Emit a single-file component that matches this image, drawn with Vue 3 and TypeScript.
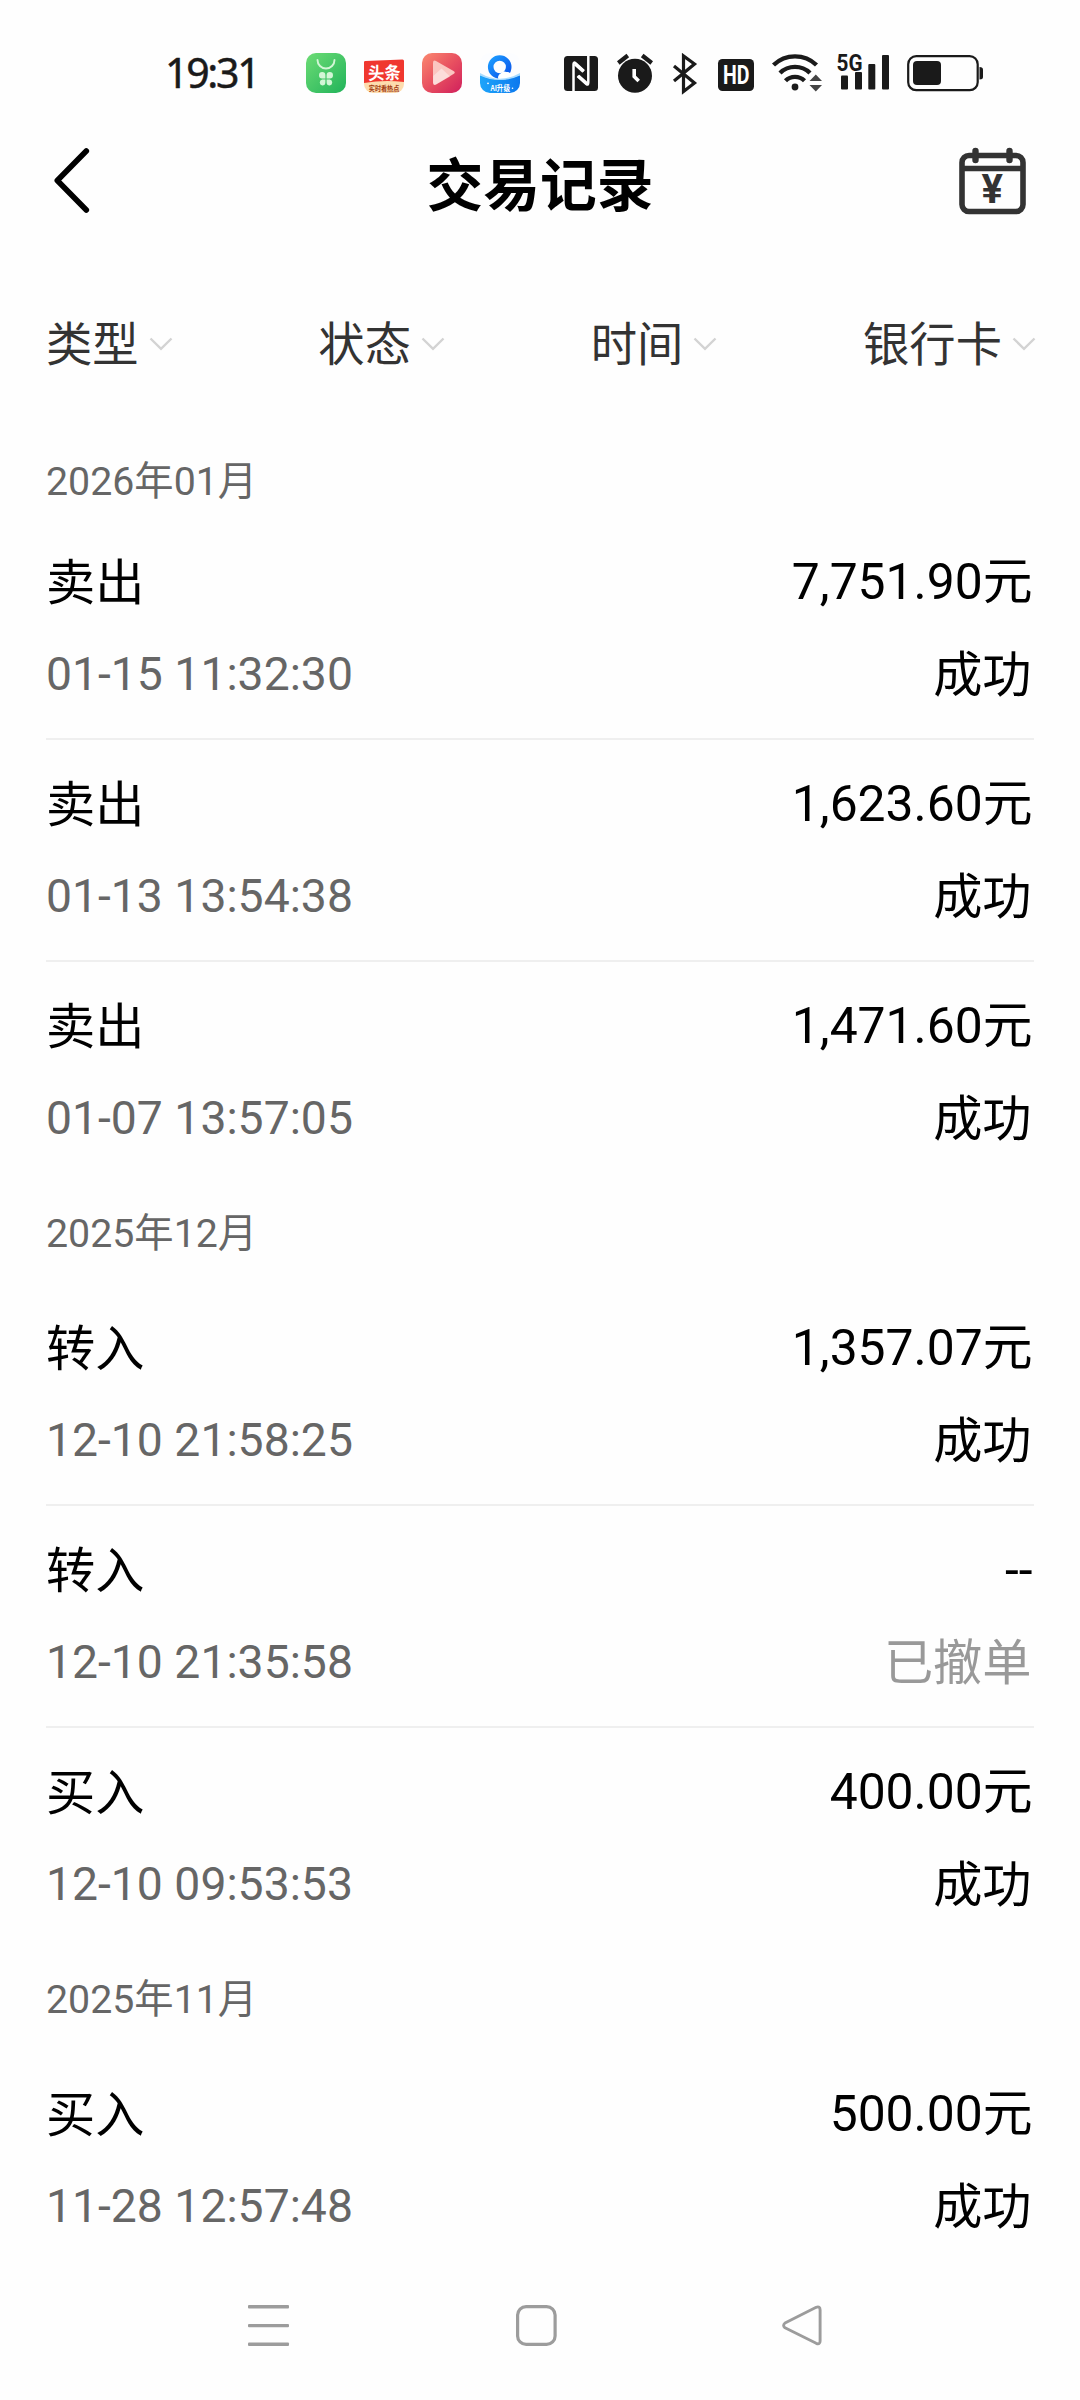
<script setup lang="ts">
interface Trade {
  kind: string
  time: string
  amount: string
  status: string
  muted?: boolean
}
interface Month {
  label: string
  trades: Trade[]
}

const filters: string[] = ['类型', '状态', '时间', '银行卡']

const months: Month[] = [
  {
    label: '2026年01月',
    trades: [
      { kind: '卖出', time: '01-15 11:32:30', amount: '7,751.90元', status: '成功' },
      { kind: '卖出', time: '01-13 13:54:38', amount: '1,623.60元', status: '成功' },
      { kind: '卖出', time: '01-07 13:57:05', amount: '1,471.60元', status: '成功' },
    ],
  },
  {
    label: '2025年12月',
    trades: [
      { kind: '转入', time: '12-10 21:58:25', amount: '1,357.07元', status: '成功' },
      { kind: '转入', time: '12-10 21:35:58', amount: '--', status: '已撤单', muted: true },
      { kind: '买入', time: '12-10 09:53:53', amount: '400.00元', status: '成功' },
    ],
  },
  {
    label: '2025年11月',
    trades: [{ kind: '买入', time: '11-28 12:57:48', amount: '500.00元', status: '成功' }],
  },
]
</script>

<template>
  <div class="screen">
    <div class="status-bar">
      <span class="clock">19:31</span>
      <svg class="apps" width="230" height="60" viewBox="300 44 230 60">
        <defs>
          <linearGradient id="gGreen" x1="0" y1="0" x2="1" y2="1">
            <stop offset="0" stop-color="#6ddc75" />
            <stop offset="1" stop-color="#21b35a" />
          </linearGradient>
          <linearGradient id="gRed" x1="0" y1="0" x2="1" y2="1">
            <stop offset="0" stop-color="#fb8a70" />
            <stop offset="0.5" stop-color="#e85060" />
            <stop offset="1" stop-color="#d01f5c" />
          </linearGradient>
          <linearGradient id="gRing" x1="0" y1="0" x2="1" y2="1">
            <stop offset="0" stop-color="#1b9bff" />
            <stop offset="1" stop-color="#0b55ea" />
          </linearGradient>
          <linearGradient id="gWave" x1="0" y1="0" x2="1" y2="0">
            <stop offset="0" stop-color="#1ea5fa" />
            <stop offset="1" stop-color="#0b78ee" />
          </linearGradient>
        </defs>
        <rect x="306" y="53" width="40" height="40" rx="10" fill="url(#gGreen)" />
        <path d="M317.500 60a8.500 8.500 0 0 0 17 0" fill="none" stroke="#d3f6d6" stroke-width="1.900" stroke-linecap="round" />
        <g fill="#d3f6d6">
          <path d="M322.200 72a3.200 3.200 0 0 1 3.200 3.200v3.200h-3.200a3.200 3.200 0 0 1 0-6.400z" />
          <path d="M329.800 72a3.200 3.200 0 0 0-3.200 3.200v3.200h3.200a3.200 3.200 0 0 0 0-6.400z" />
          <path d="M322.200 85.500a3.200 3.200 0 0 0 3.200-3.200v-2.700h-3.200a3 3 0 0 0 0 5.900z" />
          <path d="M329.800 85.500a3.200 3.200 0 0 1-3.200-3.200v-2.700h3.200a3 3 0 0 1 0 5.900z" />
        </g>
        <path d="M364 78h40v6a9 9 0 0 1-9 9h-22a9 9 0 0 1-9-9z" fill="#fddcae" />
        <path d="M364 62Q364 61 365.500 60.900L402.500 59.500Q404 59.500 404 61V82Q384 79.500 364 83z" fill="#f0372f" />
        <text x="368" y="79.300" textLength="32.500" lengthAdjust="spacingAndGlyphs" class="cjk" font-size="17.500" font-weight="700" fill="#fff" transform="rotate(-1.500 384 72)">头条</text>
        <text x="368.800" y="90.700" textLength="30.500" lengthAdjust="spacingAndGlyphs" class="cjk" font-size="6.800" font-weight="700" fill="#a03a12">实时看热点</text>
        <rect x="422" y="53" width="40" height="40" rx="10" fill="url(#gRed)" />
        <path d="M433 63q0-3.500 3-2l17.500 10q2.500 1.500 0 3l-17.500 10.500q-3 1.500-3-2z" fill="#fbc6c1" />
        <path d="M433.200 76l8.300-7.500 8.500 8-14 8q-2.800 1.200-2.800-2z" fill="#fff" opacity="0.4" />
        <path d="M480 63a10 10 0 0 1 10-10h20a10 10 0 0 1 10 10v12h-40z" fill="#fcfdff" />
        <circle cx="499.700" cy="67" r="9" fill="none" stroke="url(#gRing)" stroke-width="5.600" />
        <path d="M499 80a4.200 4.200 0 0 1 1.500-6.500 5.500 5.500 0 0 1 6-1.500 4.500 4.500 0 0 1 5 3q2.500 2.500 0 5z" fill="#fff" />
        <path d="M480 75Q500 84 520 75v8a10 10 0 0 1-10 10h-20a10 10 0 0 1-10-10z" fill="url(#gWave)" />
        <path d="M480 73Q500 84.500 520 73v2.500Q500 84.500 480 75.500z" fill="#a9dcff" />
        <text x="490.500" y="91" textLength="19.500" lengthAdjust="spacingAndGlyphs" class="cjk" font-size="7.800" font-weight="700" fill="#fff">AI升级</text>
        <circle cx="488" cy="83.300" r="0.900" fill="#fff" />
        <circle cx="512.500" cy="88.300" r="0.800" fill="#fff" />
      </svg>
      <svg class="system" width="440" height="60" viewBox="550 44 440 60" fill="#1a1a1a">
        <rect x="564" y="56" width="34" height="35" rx="3.500" />
        <path d="M573.500 91.500V64.500Q573.500 61.500 575.500 63.300L584 71" fill="none" stroke="#fff" stroke-width="2.500" />
        <path d="M588.300 55.500V82.500Q588.300 85.700 586.300 84L577.500 76" fill="none" stroke="#fff" stroke-width="2.500" />
        <path d="M575 64l8.500 7.500" stroke="#fff" stroke-width="3.200" />
        <path d="M586.800 83.500l-8.500-7.500" stroke="#fff" stroke-width="3.200" />
        <circle cx="635" cy="75.800" r="17" />
        <path d="M618.300 63l9.500-7.500M651.700 63l-9.500-7.500" stroke="#1a1a1a" stroke-width="4.200" />
        <path d="M634.200 69v7.500l4.500 4.600" fill="none" stroke="#fff" stroke-width="3.600" />
        <path d="M674 66l20.500 17-11 8.500V56l11 8-20.500 17" fill="none" stroke="#1a1a1a" stroke-width="3.200" />
        <rect x="718" y="59" width="36" height="32" rx="4.500" />
        <text x="723" y="83.700" class="hd" textLength="26.500" lengthAdjust="spacingAndGlyphs" font-size="25" font-weight="700" fill="#fff">HD</text>
        <g fill="none" stroke="#1a1a1a" stroke-width="4.400">
          <path d="M773.500 65a31 31 0 0 1 43 0" />
          <path d="M780 73a21.500 21.500 0 0 1 30 0" />
          <path d="M785.500 80.800a13.500 13.500 0 0 1 19 0" />
        </g>
        <circle cx="795" cy="87" r="3.400" />
        <path d="M809.500 81h12.500l-6.200-6.500zM809.500 85h12.500l-6.200 6.500z" fill="#444" />
        <rect x="841" y="75.500" width="7" height="14" rx="1" />
        <rect x="855" y="72" width="7" height="17.500" rx="1" />
        <rect x="868.300" y="64" width="7" height="25.500" rx="1" />
        <rect x="882" y="55" width="7" height="34.500" rx="1" />
        <text x="836.500" y="70.500" class="hd" textLength="26" lengthAdjust="spacingAndGlyphs" font-size="24.500" font-weight="700">5G</text>
        <rect x="908.200" y="56.200" width="69.500" height="34" rx="8" fill="none" stroke="#1a1a1a" stroke-width="2.200" />
        <rect x="913" y="61" width="28" height="24" rx="4" />
        <path d="M979.500 67q3.500 0 3.500 2.500v7.500q0 2.500-3.500 2.500z" />
      </svg>
    </div>

    <header class="header">
      <svg class="back" width="50" height="80" viewBox="46 140 50 80">
        <path d="M86.300 151L57.300 180.500L86.300 210" fill="none" stroke="#000" stroke-width="5.600" stroke-linecap="round" stroke-linejoin="round" />
      </svg>
      <h1>交易记录</h1>
      <svg width="80" height="80" viewBox="954 140 80 80">
        <g fill="none" stroke="#333" stroke-width="5.600">
          <rect x="962" y="155.500" width="61" height="56" rx="7" />
          <path d="M962 168.500h61" />
          <path d="M975.500 151v9M1009.500 151v9" stroke-width="6.400" stroke-linecap="round" />
        </g>
        <text x="992.300" y="203" text-anchor="middle" class="yen" font-size="40" font-weight="700" fill="#333">¥</text>
      </svg>
    </header>

    <nav class="filters">
      <button v-for="f in filters" :key="f" type="button">
        <span>{{ f }}</span>
        <svg width="24" height="14" viewBox="0 0 24 14">
          <path d="M1.500 1.500L12 11.800L22.500 1.500" fill="none" stroke="#d3d3d3" stroke-width="2.400" />
        </svg>
      </button>
    </nav>

    <main class="list">
      <section v-for="m in months" :key="m.label" class="month">
        <h2>{{ m.label }}</h2>
        <div v-for="t in m.trades" :key="t.time" class="trade">
          <div class="line">
            <span class="kind">{{ t.kind }}</span>
            <span>{{ t.amount }}</span>
          </div>
          <div class="line">
            <span class="time">{{ t.time }}</span>
            <span class="state" :class="{ muted: t.muted }">{{ t.status }}</span>
          </div>
        </div>
      </section>
    </main>

    <footer class="nav-bar">
      <svg width="42" height="42" viewBox="0 0 42 42" fill="#9c9c9c">
        <rect x="0" y="0" width="41" height="3.600" rx="1" />
        <rect x="0" y="19" width="41" height="3.200" rx="1" />
        <rect x="0" y="37.400" width="41" height="3.600" rx="1" />
      </svg>
      <svg width="42" height="42" viewBox="0 0 42 42">
        <rect x="2.600" y="1.600" width="37.500" height="37.800" rx="8.500" fill="none" stroke="#9c9c9c" stroke-width="3.200" />
      </svg>
      <svg width="42" height="42" viewBox="0 0 42 42">
        <path d="M4 18L35.200 2.300Q39.100 0.800 39.100 5V36Q39.100 40 35.200 38.300L4 22.800Q1.200 20.400 4 18z" fill="none" stroke="#9c9c9c" stroke-width="2.900" stroke-linejoin="round" />
      </svg>
    </footer>
  </div>
</template>

<style>
body {
  background: #fefefe;
}
</style>

<style scoped>
.screen {
  display: flex;
  flex-direction: column;
  width: 1080px;
  height: 2400px;
  overflow: hidden;
  background: #fefefe;
  color: #000;
  font-family: Roboto, 'Noto Sans CJK SC', sans-serif;
}
svg {
  display: block;
  flex: none;
}
.status-bar {
  display: flex;
  align-items: center;
  box-sizing: border-box;
  height: 120px;
  padding: 44px 0 16px 165px;
}
.clock {
  width: 135px;
  height: 60px;
  line-height: 57px;
  font-family: 'Noto Sans', sans-serif;
  font-size: 41px;
  font-weight: 400;
  letter-spacing: -2.300px;
  color: #1a1a1a;
  -webkit-text-stroke: 0.500px #1a1a1a;
}
.system {
  margin-left: 20px;
}
.cjk {
  font-family: 'Noto Sans CJK SC', sans-serif;
}
.hd,
.yen {
  font-family: Roboto, sans-serif;
}
.header {
  display: flex;
  align-items: center;
  justify-content: space-between;
  height: 120px;
  padding: 0 46px;
}
.back {
  margin-right: 30px;
}
h1 {
  margin: 13px 0 0;
  line-height: 80px;
  font-size: 56.800px;
  font-weight: 700;
}
.filters {
  display: flex;
  justify-content: space-between;
  align-items: center;
  height: 60px;
  margin: 74px 44px 0 46px;
}
.filters button {
  display: flex;
  align-items: center;
  gap: 10px;
  padding: 0;
  border: 0;
  background: none;
  font: inherit;
  font-size: 46.300px;
  line-height: 60px;
  color: #333;
}
.filters span {
  margin: 1px 0 -1px;
}
.list {
  padding: 58px 46px 0;
  flex: 1;
}
h2 {
  margin: 0;
  height: 100px;
  box-sizing: border-box;
  padding-top: 20px;
  line-height: 60px;
  font-size: 39.300px;
  font-weight: 400;
  color: #666;
}
.month:first-child h2 {
  height: 86px;
}
.trade {
  box-sizing: border-box;
  height: 222px;
  padding-top: 18px;
  border-bottom: 2px solid #efefef;
}
.trade:last-child {
  border-bottom-color: transparent;
}
.line {
  display: flex;
  justify-content: space-between;
  align-items: center;
  height: 92px;
  padding-right: 1.500px;
  font-size: 49.800px;
  line-height: 92px;
}
.kind,
.state {
  margin: 1px 0 -1px;
  font-size: 49.200px;
}
.state {
  margin-right: 1px;
}
.time {
  font-size: 46.300px;
  color: #666;
}
.muted {
  color: #999;
}
.nav-bar {
  display: flex;
  justify-content: space-between;
  box-sizing: border-box;
  height: 95px;
  margin: 0 257px 0 248px;
}
</style>
